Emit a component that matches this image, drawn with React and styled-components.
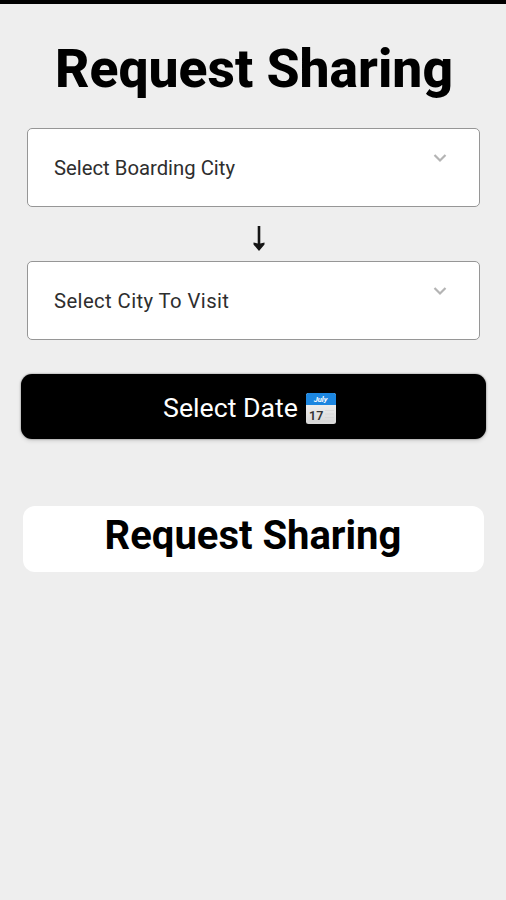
import React from 'react';
import styled, { createGlobalStyle } from 'styled-components';

const GlobalStyle = createGlobalStyle`
  * { box-sizing: border-box; }
  body { margin: 0; background: #eeeeee; font-family: Roboto, sans-serif; color: #000; }
  button { font-family: inherit; }
`;

const Screen = styled.main`
  display: flex;
  flex-direction: column;
  align-items: center;
  height: 900px;
  border-top: 4px solid #000;
  background: #eeeeee;
`;

const Title = styled.h1`
  margin: 33px 0 0 2px;
  font-size: 53.4px;
  line-height: 64px;
  font-weight: 800;
  white-space: nowrap;
`;

const CitySelect = styled.button`
  display: flex;
  justify-content: space-between;
  align-items: flex-start;
  width: 453px;
  height: 79px;
  margin: ${(p) => p.$gap}px 0 0 1px;
  padding: 19px 32px 0 26px;
  border: 1px solid #969696;
  border-radius: 5px;
  background: #fff;
  color: #2e2e2e;
  font-size: 20.3px;
  font-weight: 400;
  line-height: 40px;
  letter-spacing: ${(p) => p.$tracking}px;
`;

const Chevron = styled.svg`
  width: 14px;
  height: 10px;
  margin-top: 5px;
`;

const Arrow = styled.svg`
  width: 12px;
  height: 26px;
  margin: 19px 0 0 12px;
`;

const DateButton = styled.button`
  display: flex;
  justify-content: center;
  align-items: center;
  gap: 8px;
  width: 465px;
  height: 65px;
  margin-top: 34px;
  padding: 2px 7px 0 0;
  border: 0;
  border-radius: 11px;
  background: #000;
  box-shadow: 0 0 2px rgba(0, 0, 0, 0.5), 0 2px 4px rgba(0, 0, 0, 0.12);
  color: #fff;
  font-size: 26.7px;
`;

const Calendar = styled.svg`
  width: 30px;
  height: 31px;
  margin-top: 2px;
`;

const SubmitButton = styled.button`
  width: 461px;
  height: 66px;
  margin-top: 67px;
  padding: 0 0 8px;
  border: 0;
  border-radius: 12px;
  background: #fff;
  color: #000;
  font-size: 40px;
  font-weight: 700;
`;

function CityField({ label, gap, tracking }) {
  return (
    <CitySelect $gap={gap} $tracking={tracking}>
      <span>{label}</span>
      <Chevron viewBox="0 0 14 10" fill="none" stroke="#b4b4b4" strokeWidth="2.2">
        <path d="M1.5 2l5.5 5.500L12.500 2" />
      </Chevron>
    </CitySelect>
  );
}

function CalendarIcon() {
  return (
    <Calendar viewBox="0 0 30 31">
      <defs>
        <linearGradient id="page" x1="0" y1="0" x2="0" y2="1">
          <stop offset="0" stopColor="#fafafa" />
          <stop offset="1" stopColor="#d8d8d8" />
        </linearGradient>
      </defs>
      <rect width="30" height="31" rx="2.5" fill="url(#page)" />
      <path d="M0 12V2.500Q0 0 2.500 0h25Q30 0 30 2.500V12z" fill="#1c86e0" />
      <path d="M19 17.500h9M19 21h9M19 24.500h9M3 28h25" stroke="#d2d2d2" strokeWidth=".6" />
      <text x="14.500" y="9" textAnchor="middle" fill="#fff" fontFamily="Roboto, sans-serif" fontSize="7.500" fontWeight="700" fontStyle="italic">July</text>
      <text x="3" y="26.500" fill="#333" fontFamily="Roboto, sans-serif" fontSize="12.500" fontWeight="600">17</text>
    </Calendar>
  );
}

export default function App() {
  return (
    <>
      <GlobalStyle />
      <Screen>
        <Title>Request Sharing</Title>
        <CityField label="Select Boarding City" gap={27} tracking={0} />
        <Arrow viewBox="0 0 12 26">
          <path d="M4.700 0h2.600v17.500l4.200-1v2L6 25 .5 18.500v-2l4.200 1z" fill="#151515" />
        </Arrow>
        <CityField label="Select City To Visit" gap={9} tracking={0.4} />
        <DateButton>
          <span>Select Date</span>
          <CalendarIcon />
        </DateButton>
        <SubmitButton>Request Sharing</SubmitButton>
      </Screen>
    </>
  );
}
